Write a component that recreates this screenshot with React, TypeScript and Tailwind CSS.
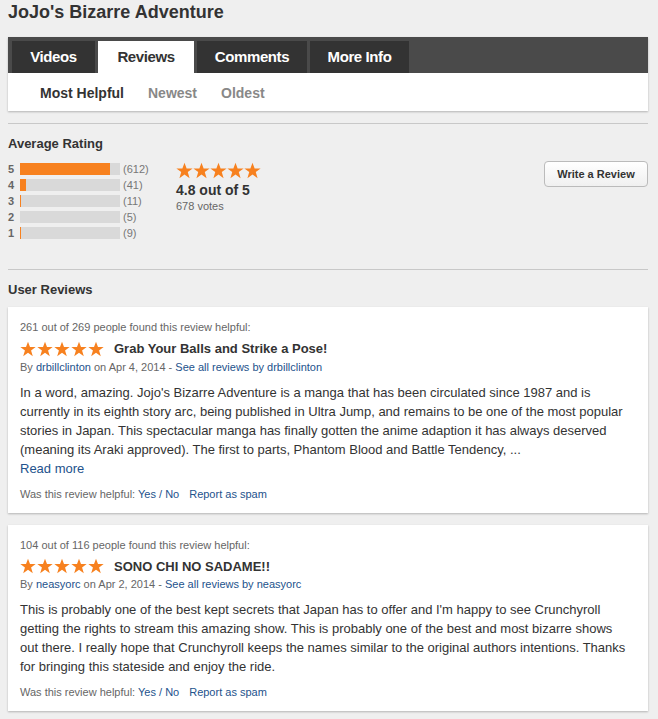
import React from 'react';

const ORANGE = '#f7811f';

function Star({ size = 16 }: { size?: number }) {
  return (
    <svg width={size} height={size} viewBox="0 0 24 24" className="shrink-0">
      <polygon
        points="12,1 15,9 23.5,9 16.6,14.2 19.2,22.8 12,17.6 4.8,22.8 7.4,14.2 0.5,9 9,9"
        fill={ORANGE}
      />
    </svg>
  );
}

function Stars({ size = 16, gap = 'gap-[1px]' }: { size?: number; gap?: string }) {
  return (
    <div className={`flex ${gap}`}>
      {[0, 1, 2, 3, 4].map((i) => (
        <Star key={i} size={size} />
      ))}
    </div>
  );
}

const ratingRows = [
  { n: 5, count: 612, fill: 90 },
  { n: 4, count: 41, fill: 6 },
  { n: 3, count: 11, fill: 1 },
  { n: 2, count: 5, fill: 0 },
  { n: 1, count: 9, fill: 1 },
];

const reviews = [
  {
    helpful: '261 out of 269 people found this review helpful:',
    title: 'Grab Your Balls and Strike a Pose!',
    user: 'drbillclinton',
    date: 'Apr 4, 2014',
    body: "In a word, amazing. Jojo's Bizarre Adventure is a manga that has been circulated since 1987 and is currently in its eighth story arc, being published in Ultra Jump, and remains to be one of the most popular stories in Japan. This spectacular manga has finally gotten the anime adaption it has always deserved (meaning its Araki approved). The first to parts, Phantom Blood and Battle Tendency, ...",
    more: true,
  },
  {
    helpful: '104 out of 116 people found this review helpful:',
    title: 'SONO CHI NO SADAME!!',
    user: 'neasyorc',
    date: 'Apr 2, 2014',
    body: "This is probably one of the best kept secrets that Japan has to offer and I'm happy to see Crunchyroll getting the rights to stream this amazing show. This is probably one of the best and most bizarre shows out there. I really hope that Crunchyroll keeps the names similar to the original authors intentions. Thanks for bringing this stateside and enjoy the ride.",
    more: false,
  },
];

const tabs = [
  { label: 'Videos', w: 'w-[83px]' },
  { label: 'Reviews', w: 'w-[96px]' },
  { label: 'Comments', w: 'w-[110px]' },
  { label: 'More Info', w: 'w-[99px]' },
];

export default function App() {
  return (
    <div
      className="min-h-[719px] bg-[#efefef] text-[#333] pl-[8px] pr-[10px] pb-[6px]"
      style={{ fontFamily: '"Liberation Sans", Arial, Helvetica, sans-serif' }}
    >
      {/* Title */}
      <h1 className="text-[18px] font-bold leading-[24px] text-[#333]">
        JoJo's Bizarre Adventure
      </h1>

      {/* Tabs */}
      <div className="mt-[13px] shadow-[0_1px_2px_rgba(0,0,0,0.25)]">
        <div className="bg-[#4a4a4a] h-[36px] flex items-end gap-[3px] pl-[4px]">
          {tabs.map((t) => (
            <div
              key={t.label}
              className={
                t.label === 'Reviews'
                  ? `${t.w} h-[32px] bg-white text-[#333] text-[15px] font-bold flex items-center justify-center tracking-[-0.4px]`
                  : `${t.w} h-[32px] bg-[#333] text-white text-[15px] font-bold flex items-center justify-center tracking-[-0.4px]`
              }
            >
              {t.label}
            </div>
          ))}
        </div>
        <div className="bg-white h-[38px] flex items-center gap-[24px] pl-[32px] pt-[2px] text-[14px] font-bold">
          <span className="text-[#333]">Most Helpful</span>
          <span className="text-[#888]">Newest</span>
          <span className="text-[#888]">Oldest</span>
        </div>
      </div>

      <div className="mt-[12px] border-t border-[#c8c8c8]" />

      {/* Average rating */}
      <h2 className="text-[13px] font-bold mt-[12px] leading-[16px]">Average Rating</h2>
      <div className="flex items-start mt-[11px]">
        <div className="flex flex-col gap-[4px] w-[168px]">
          {ratingRows.map((r) => (
            <div key={r.n} className="flex items-center h-[12px]">
              <span className="w-[12px] text-[11px] font-bold text-[#666]">{r.n}</span>
              <div className="w-[100px] h-[12px] bg-[#d9d9d9]">
                <div className="h-full bg-[#f7811f]" style={{ width: `${r.fill}%` }} />
              </div>
              <span className="ml-[3px] text-[11px] text-[#777]">({r.count})</span>
            </div>
          ))}
        </div>
        <div className="flex flex-col -mt-[1px]">
          <Stars size={17} gap="gap-0" />
          <div className="text-[14px] font-bold mt-[2px] leading-[18px]">4.8 out of 5</div>
          <div className="text-[11px] text-[#666] leading-[14px]">678 votes</div>
        </div>
        <button className="ml-auto -mt-[2px] h-[26px] w-[104px] rounded-[4px] border border-[#bbb] bg-gradient-to-b from-white to-[#f0f0f0] text-[11px] font-bold text-[#333]">
          Write a Review
        </button>
      </div>

      <div className="mt-[30px] border-t border-[#c8c8c8]" />

      {/* User reviews */}
      <h2 className="text-[13px] font-bold mt-[12px] leading-[16px]">User Reviews</h2>
      <div className="mt-[9px] flex flex-col gap-[12px]">
        {reviews.map((r) => (
          <div
            key={r.title}
            className="bg-white px-[12px] pt-[13px] pb-[12px] shadow-[0_1px_2px_rgba(0,0,0,0.25)]"
          >
            <div className="text-[11px] text-[#666] leading-[14px]">{r.helpful}</div>
            <div className="flex items-center mt-[5px]">
              <Stars size={16} gap="gap-[1px]" />
              <span className="ml-[10px] text-[13px] font-bold text-[#333]">{r.title}</span>
            </div>
            <div className="text-[11px] text-[#666] mt-[1px] leading-[14px]">
              By <a className="text-[#23528c]">{r.user}</a> on {r.date} -{' '}
              <a className="text-[#23528c]">See all reviews by {r.user}</a>
            </div>
            <p className="text-[13px] leading-[19px] text-[#333] mt-[9px] pr-[6px]">{r.body}</p>
            {r.more && <a className="block text-[13px] leading-[19px] text-[#23528c]">Read more</a>}
            <div className="text-[11px] text-[#666] mt-[9px] leading-[14px]">
              Was this review helpful: <a className="text-[#23528c]">Yes</a>
              <span className="text-[#23528c]"> / </span>
              <a className="text-[#23528c]">No</a>
              <a className="ml-[10px] text-[#23528c]">Report as spam</a>
            </div>
          </div>
        ))}
      </div>
    </div>
  );
}
